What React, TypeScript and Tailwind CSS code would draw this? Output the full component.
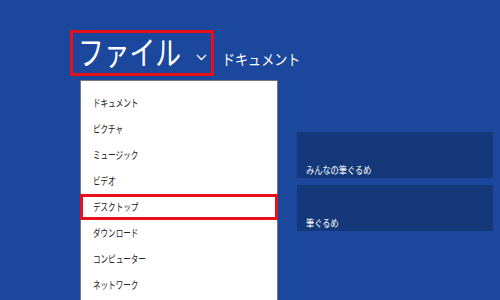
import React from 'react';

const places = ['ドキュメント', 'ピクチャ', 'ミュージック', 'ビデオ', 'デスクトップ', 'ダウンロード', 'コンピューター', 'ネットワーク'];
const tiles = ['みんなの筆ぐるめ', '筆ぐるめ'];

const font = { fontFamily: '"Noto Sans CJK JP", "Noto Sans", sans-serif' };

const App: React.FC = () => {
  return (
    <div className="w-[500px] h-[300px] overflow-hidden bg-[#1b489c] text-white" style={font}>
      {/* ヘッダー */}
      <div className="flex items-end pt-[30px] pl-[70px]">
        <div className="w-[144px] h-[46px] border-[3px] border-[#e8101a] flex items-center pl-[5px] whitespace-nowrap">
          <span className="inline-block w-[104px] text-[33px] leading-none -mt-[3px] scale-x-[0.78] origin-left">ファイル</span>
          <svg className="ml-[14px] mt-[8px]" width="11" height="7" viewBox="0 0 11 7">
            <path d="M1 1 L5.5 5.5 L10 1" fill="none" stroke="white" strokeWidth="1.3" />
          </svg>
        </div>
        <span className="ml-[8px] mb-[10px] inline-block w-[80px] text-[15px] leading-none whitespace-nowrap scale-x-[0.87] origin-left">
          ドキュメント
        </span>
      </div>

      <div className="flex">
        {/* ドロップダウン */}
        <div className="ml-[80px] mt-[4px] w-[198px] h-[240px] bg-white border border-[#777] text-[#222] text-[10.5px] pt-[9px]">
          {places.map((p) => (
            <div
              key={p}
              className={
                p === 'デスクトップ'
                  ? 'h-[26px] flex items-center pl-[10px] border-[3px] border-[#e8101a] -mx-px'
                  : 'h-[26px] flex items-center pl-[12px]'
              }
            >
              <span className="inline-block whitespace-nowrap scale-x-[0.72] origin-left">{p}</span>
            </div>
          ))}
        </div>

        {/* タイル */}
        <div className="ml-[19px] mt-[56px] flex flex-col gap-[7px]">
          {tiles.map((t) => (
            <div key={t} className="w-[196px] h-[46px] bg-[#14387a] flex items-end pl-[9px] pb-[1px] text-[10px]">
              <span className="inline-block whitespace-nowrap scale-x-[0.82] origin-left">{t}</span>
            </div>
          ))}
        </div>
      </div>
    </div>
  );
};

export default App;
